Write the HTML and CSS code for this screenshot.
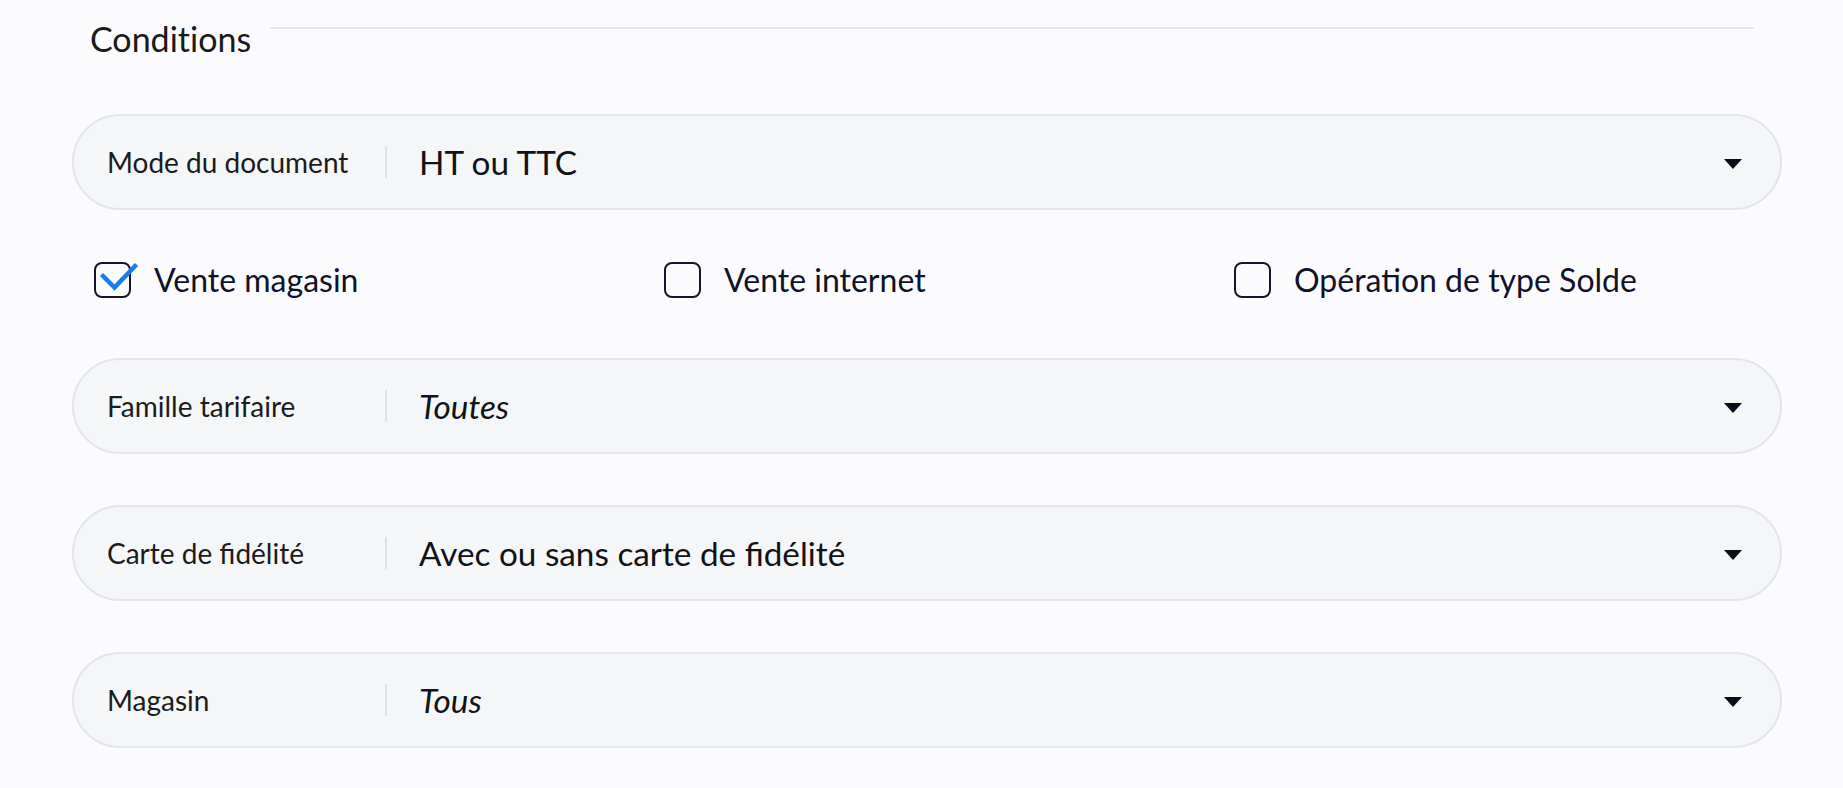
FILE: index.html
```html
<!DOCTYPE html>
<html lang="fr">
<head>
  <meta charset="UTF-8">
  <title>Conditions</title>
  <link rel="stylesheet" href="styles.css">
</head>
<body>
  <div class="page">
    <div class="section-head">
      <h2 class="section-title">Conditions</h2>
      <div class="section-line"></div>
    </div>

    <div class="field">
      <span class="field-label">Mode du document</span>
      <span class="field-sep"></span>
      <span class="field-value">HT ou TTC</span>
      <span class="caret"></span>
    </div>

    <div class="checks">
      <label class="check">
        <span class="box">
          <svg class="tick" width="46" height="30" viewBox="0 0 46 30">
            <path d="M7.5 12.5 L20.5 25.5 L42.5 2.5" fill="none" stroke="#1d7ae8" stroke-width="4.5" stroke-linejoin="miter"/>
          </svg>
        </span>
        Vente magasin
      </label>
      <label class="check">
        <span class="box"></span>
        Vente internet
      </label>
      <label class="check">
        <span class="box"></span>
        Opération de type Solde
      </label>
    </div>

    <div class="field">
      <span class="field-label">Famille tarifaire</span>
      <span class="field-sep"></span>
      <span class="field-value empty">Toutes</span>
      <span class="caret"></span>
    </div>

    <div class="field spaced">
      <span class="field-label">Carte de fidélité</span>
      <span class="field-sep"></span>
      <span class="field-value">Avec ou sans carte de fidélité</span>
      <span class="caret"></span>
    </div>

    <div class="field spaced">
      <span class="field-label">Magasin</span>
      <span class="field-sep"></span>
      <span class="field-value empty">Tous</span>
      <span class="caret"></span>
    </div>
  </div>
</body>
</html>
```

FILE: styles.css
```css
body {
  margin: 0;
  background: #fbfbfd;
  font-family: Lato, "Open Sans", sans-serif;
  color: #16171f;
}
.page {
  padding: 19px 61px 0 72px;
}
.section-head {
  display: flex;
  align-items: flex-start;
  gap: 19px;
  padding: 0 28px 0 18px;
}
.section-title {
  margin: 0;
  font-size: 34px;
  font-weight: 400;
  line-height: 40px;
  color: #1a1a1a;
  font-variant-ligatures: no-common-ligatures;
}
.section-line {
  flex: 1;
  height: 2px;
  margin-top: 8px;
  background: #e2e7ee;
}
.field {
  display: flex;
  align-items: center;
  box-sizing: border-box;
  height: 96px;
  margin-top: 55px;
  padding: 0 38px 0 33px;
  background: #f4f6f8;
  border: 2px solid #e0e6ec;
  border-radius: 48px;
}
.field.spaced {
  margin-top: 51px;
}
.field-label {
  flex: none;
  width: 278px;
  font-size: 28px;
  color: #1b1b1b;
}
.field-sep {
  flex: none;
  width: 2px;
  height: 32px;
  background: #dbe3ea;
}
.field-value {
  flex: 1;
  margin-left: 32px;
  font-size: 33.3px;
  color: #111216;
}
.field-value.empty {
  font-style: italic;
}
.caret {
  width: 0;
  height: 0;
  border-left: 9.5px solid transparent;
  border-right: 9.5px solid transparent;
  border-top: 10px solid #0b0c18;
  margin-top: 4px;
}
.checks {
  display: grid;
  grid-template-columns: repeat(3, 1fr);
  margin: 52px 0 60px;
}
.check {
  display: flex;
  align-items: center;
  gap: 23px;
  padding-left: 22px;
  height: 36px;
  font-size: 32px;
  line-height: 36px;
  color: #0f1228;
}
.box {
  position: relative;
  box-sizing: border-box;
  width: 37px;
  height: 36px;
  border: 2px solid #14162a;
  border-radius: 8px;
}
.tick {
  position: absolute;
  left: -2px;
  top: -2px;
}
```
